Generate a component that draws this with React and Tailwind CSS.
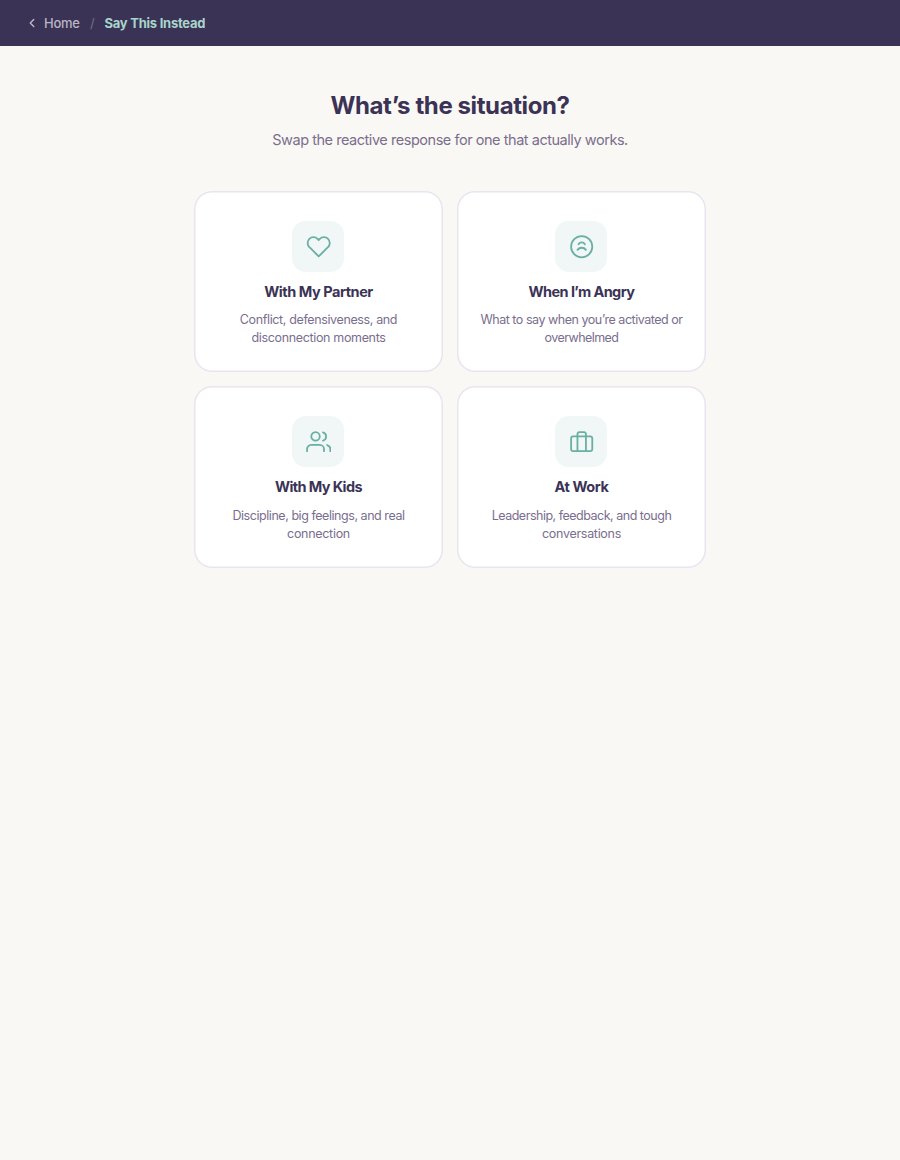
import React from "react";

const cards = [
  {
    title: "With My Partner",
    lines: ["Conflict, defensiveness, and", "disconnection moments"],
    titleCls: "tracking-[-0.45px]",
    lineCls: ["tracking-[-0.37px]", "tracking-[-0.34px]"],
    icon: <path d="M20.84 4.61a5.5 5.5 0 0 0-7.78 0L12 5.67l-1.06-1.06a5.5 5.5 0 0 0-7.78 7.78l1.06 1.06L12 21.23l7.78-7.78 1.06-1.06a5.5 5.5 0 0 0 0-7.78z" />,
  },
  {
    title: "When I’m Angry",
    lines: ["What to say when you’re activated or", "overwhelmed"],
    titleCls: "tracking-[-0.58px]",
    lineCls: ["tracking-[-0.47px]", "tracking-[-0.55px]"],
    icon: (
      <>
        <circle cx="12" cy="12" r="10" />
        <path d="M8 15s1.5-2 4-2 4 2 4 2" />
        <path d="M9 9.7s1-1.7 3-1.7 3 1.7 3 1.7" />
      </>
    ),
  },
  {
    title: "With My Kids",
    lines: ["Discipline, big feelings, and real", "connection"],
    titleCls: "tracking-[-0.62px]",
    lineCls: ["tracking-[-0.45px]", "tracking-[-0.3px]"],
    icon: (
      <>
        <path d="M17 21v-2a4 4 0 0 0-4-4H5a4 4 0 0 0-4 4v2" />
        <circle cx="9" cy="7" r="4" />
        <path d="M23 21v-2a4 4 0 0 0-3-3.87" />
        <path d="M16 3.13a4 4 0 0 1 0 7.75" />
      </>
    ),
  },
  {
    title: "At Work",
    lines: ["Leadership, feedback, and tough", "conversations"],
    titleCls: "tracking-[-0.45px]",
    lineCls: ["tracking-[-0.49px]", "tracking-[-0.3px]"],
    icon: (
      <>
        <rect x="2" y="7" width="20" height="14" rx="2" />
        <path d="M16 21V5a2 2 0 0 0-2-2h-4a2 2 0 0 0-2 2v16" />
      </>
    ),
  },
];

function Card({ card }) {
  return (
    <button className="flex h-[181.4px] flex-col items-center rounded-[18px] bg-white pt-[29.5px] text-center shadow-[inset_0_0_0_1.5px_#e8e4f0]">
      <span className="mr-px flex h-[51.5px] w-13 shrink-0 items-center justify-center rounded-[14px] bg-[#f0f7f6]">
        <svg className="ml-[1.4px] size-[25.4px]" viewBox="0 0 24 24" fill="none" stroke="#6aafa3" strokeWidth="1.7" strokeLinecap="round" strokeLinejoin="round">
          {card.icon}
        </svg>
      </span>
      <span className={`mt-[8.5px] text-[14.5px] leading-[22px] font-bold whitespace-nowrap text-[#3b3355] ${card.titleCls}`}>{card.title}</span>
      <span className="mt-[8.8px] flex flex-col text-[12.5px] leading-[18.1px] whitespace-nowrap text-[#7a6e8e]">
        {card.lines.map((line, i) => (
          <span key={line} className={card.lineCls[i]}>{line}</span>
        ))}
      </span>
    </button>
  );
}

export default function App() {
  return (
    <div className="min-h-screen bg-[#faf8f4] font-['Inter',sans-serif]">
      <header className="flex h-[46px] items-center bg-[#3b3355] pl-6 text-[13px]">
        <svg className="ml-[0.5px] size-[14px]" viewBox="0 0 24 24" fill="none" stroke="#bdb8c9" strokeWidth="2.4" strokeLinecap="round" strokeLinejoin="round">
          <path d="M15 18l-6-6 6-6" />
        </svg>
        <span className="ml-[5.5px] w-[36px] pt-[2px] font-medium tracking-[-0.25px] text-[#b9b5c3]">Home</span>
        <span className="ml-[10px] w-[5px] pt-[2px] text-[#766f88]">/</span>
        <span className="ml-[9.5px] pt-[2px] font-bold tracking-[-0.25px] text-[#a8d5cc]">Say This Instead</span>
      </header>
      <main className="mx-auto w-[512px] pt-[42px]">
        <h1 className="text-center text-2xl leading-9 font-bold tracking-[-0.4px] text-[#3b3355]">What’s the situation?</h1>
        <p className="mt-[5px] text-center text-[14.5px] leading-[22px] tracking-[-0.46px] text-[#7a6e8e]">Swap the reactive response for one that actually works.</p>
        <div className="mt-10 grid grid-cols-2 gap-[14px]">
          {cards.map((card) => (
            <Card key={card.title} card={card} />
          ))}
        </div>
      </main>
    </div>
  );
}
